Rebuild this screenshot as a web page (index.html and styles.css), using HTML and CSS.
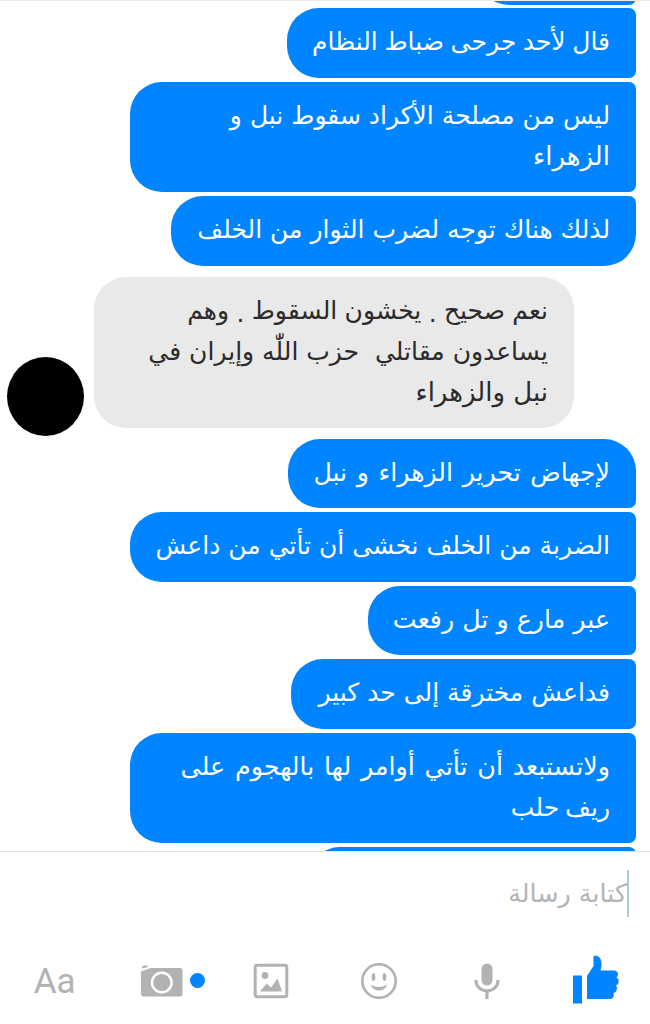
FILE: index.html
```
<!DOCTYPE html>
<html lang="ar">
<head>
    <meta charset="UTF-8" />
    <meta name="viewport" content="width=device-width, initial-scale=1.0" />
    <title>المحادثة</title>
    <link rel="stylesheet" href="styles.css">
</head>
<body>
    <div class="chat">
        <div class="messages">
            <div class="bubble sent middle previous"></div>
            <div class="bubble sent middle w-349"><p class="tight">قال لأحد جرحى ضباط النظام</p></div>
            <div class="bubble sent middle w-506">
                <p>ليس من مصلحة الأكراد سقوط نبل و</p>
                <p class="big">الزهراء</p>
            </div>
            <div class="bubble sent last w-465"><p>لذلك هناك توجه لضرب الثوار من الخلف</p></div>

            <div class="received-row">
                <div class="avatar"></div>
                <div class="bubble received">
                    <p class="snug">نعم صحيح <span class="dot">.</span> يخشون السقوط <span class="dot">.</span> وهم</p>
                    <p>يساعدون مقاتلي&nbsp; حزب اللّٰه وإيران في</p>
                    <p class="big">نبل والزهراء</p>
                </div>
            </div>

            <div class="bubble sent first w-348"><p class="loose">لإجهاض تحرير الزهراء و نبل</p></div>
            <div class="bubble sent middle w-506"><p>الضربة من الخلف نخشى أن تأتي من داعش</p></div>
            <div class="bubble sent middle w-268"><p class="large">عبر مارع و تل رفعت</p></div>
            <div class="bubble sent middle w-345"><p>فداعش مخترقة إلى حد كبير</p></div>
            <div class="bubble sent middle w-506">
                <p class="wide">ولاتستبعد أن تأتي أوامر لها بالهجوم على</p>
                <p class="short">ريف حلب</p>
            </div>
            <div class="bubble sent middle next"></div>
        </div>

        <div class="composer">
            <div class="input"><span class="placeholder">كتابة رسالة</span></div>
            <div class="toolbar">
                <div class="tool text-tool">Aa</div>
                <div class="tool">
                    <svg width="42" height="34" viewBox="0 0 42 34">
                        <path fill="#b2b2b2" d="M1 4Q1 1.500 3 1.500H7.500L6 3.200L1 4.500ZM0 7.500L9.500 4H39Q41.500 4 41.500 6.500V30Q41.500 32.500 39 32.500H2.500Q0 32.500 0 30Z"/>
                        <circle cx="20.800" cy="18.500" r="9.800" fill="none" stroke="#fff" stroke-width="2.500"/>
                    </svg>
                    <span class="badge"></span>
                </div>
                <div class="tool">
                    <svg width="36" height="36" viewBox="0 0 36 36">
                        <rect x="2.200" y="2.200" width="31.600" height="31.600" rx="2" fill="none" stroke="#b2b2b2" stroke-width="3"/>
                        <circle cx="12" cy="12.500" r="3.400" fill="#b2b2b2"/>
                        <path fill="#b2b2b2" d="M7 28.500L13.500 20.500L18 24.500L24.500 15.500L29 28.500Z"/>
                    </svg>
                </div>
                <div class="tool">
                    <svg width="38" height="38" viewBox="0 0 38 38">
                        <circle cx="19" cy="19" r="16.700" fill="none" stroke="#b2b2b2" stroke-width="2.600"/>
                        <ellipse cx="13.500" cy="15" rx="1.800" ry="4" fill="#b2b2b2"/>
                        <ellipse cx="24.500" cy="15" rx="1.800" ry="4" fill="#b2b2b2"/>
                        <path fill="#b2b2b2" d="M10.500 22.500Q19 27.500 27.500 22.500Q25 28.500 19 28.500Q13 28.500 10.500 22.500Z"/>
                    </svg>
                </div>
                <div class="tool">
                    <svg width="28" height="38" viewBox="0 0 28 38">
                        <rect x="8.500" y="1.500" width="11" height="22" rx="5.500" fill="#b2b2b2"/>
                        <path fill="none" stroke="#b2b2b2" stroke-width="3.200" d="M3 18C3 32.500 25 32.500 25 18M14 28.500V37"/>
                    </svg>
                </div>
                <div class="tool">
                    <svg width="48" height="52" viewBox="0 0 48 52">
                        <path fill="#0084ff" d="M1 20.500H10V48.500H1ZM15 21L21.500 11L21.500 2Q21.500 0.500 23.500 0.500Q29.500 1.500 29.500 8.500Q29.500 12.500 28.500 15.500H42.500Q46 16 46 19.500Q45.800 21.500 44.500 22.500Q47.300 24 46.600 27.500Q46 29.500 44 30.500Q45.800 32.500 44.500 35.500Q43.500 37.500 41.500 38Q42.500 40.500 41 42.500Q39.800 44 37.500 44H15Z"/>
                    </svg>
                </div>
            </div>
        </div>
    </div>
</body>
</html>
```
FILE: styles.css
```
* {
    box-sizing: border-box;
}

body {
    margin: 0;
    background: #fff;
    font-family: "DejaVu Sans", sans-serif;
}

.chat {
    width: 650px;
    height: 1024px;
    overflow: hidden;
}

.messages {
    display: flex;
    flex-direction: column;
    align-items: flex-end;
    gap: 3.900px;
    height: 851px;
    padding-right: 14px;
    border-top: 1px solid #ececec;
    overflow: hidden;
}

.bubble {
    flex-shrink: 0;
    padding: 13px 26px 15.500px;
    border-radius: 32px;
    direction: rtl;
    text-align: right;
}

.bubble p {
    margin: 0;
    font-size: 25px;
    line-height: 41px;
    white-space: nowrap;
}

.bubble .tight {
    word-spacing: -1.300px;
}

.bubble .snug {
    word-spacing: -0.600px;
}

.bubble .short {
    word-spacing: -2px;
}

.bubble .loose {
    font-size: 25.200px;
    word-spacing: 1.600px;
}

.bubble .large {
    font-size: 25.300px;
}

.bubble .wide {
    font-size: 25.400px;
    word-spacing: 1.600px;
}

.bubble .big {
    font-size: 26px;
}

.sent {
    background: #0084ff;
    color: #fff;
}

.middle {
    border-radius: 32px 7px 7px 32px;
}

.first {
    border-radius: 32px 32px 7px 32px;
}

.last {
    border-radius: 32px 7px 32px 32px;
}

.previous {
    width: 159px;
    height: 69.500px;
    margin-top: -66px;
}

.next {
    width: 328px;
    height: 69.500px;
}

.w-268 {
    width: 268px;
}

.w-345 {
    width: 345px;
}

.w-348 {
    width: 348px;
}

.w-349 {
    width: 349px;
}

.w-465 {
    width: 465px;
}

.w-506 {
    width: 506px;
}

.received-row {
    display: flex;
    flex-shrink: 0;
    align-items: flex-end;
    gap: 10px;
    align-self: stretch;
    margin: 7px 0 -1px;
    padding-left: 7px;
}

.received {
    width: 480px;
    margin-bottom: 8px;
    background: #e9e9e9;
    color: #2b2b2b;
}

.received .dot {
    position: relative;
    top: 3px;
}

.avatar {
    width: 77px;
    height: 79px;
    border-radius: 50%;
    background: #000;
}

.composer {
    height: 173px;
    border-top: 1px solid #e4e4e4;
}

.input {
    display: flex;
    justify-content: flex-end;
    padding: 18px 21px 0 0;
}

.placeholder {
    height: 47px;
    border-right: 2px solid #a9cbd3;
    color: #b4b4b4;
    font-size: 25.400px;
    line-height: 47px;
    direction: rtl;
}

.toolbar {
    display: flex;
    align-items: center;
    height: 62px;
    margin-top: 33px;
}

.tool {
    position: relative;
    display: flex;
    justify-content: center;
    align-items: center;
    width: 108.300px;
}

.text-tool {
    padding: 2px 0 0 1px;
    color: #b2b2b2;
    font-family: Roboto, sans-serif;
    font-size: 35px;
    line-height: 40px;
}

.badge {
    position: absolute;
    right: 12px;
    top: 9px;
    width: 15px;
    height: 15px;
    border-radius: 50%;
    background: #0084ff;
}
```
